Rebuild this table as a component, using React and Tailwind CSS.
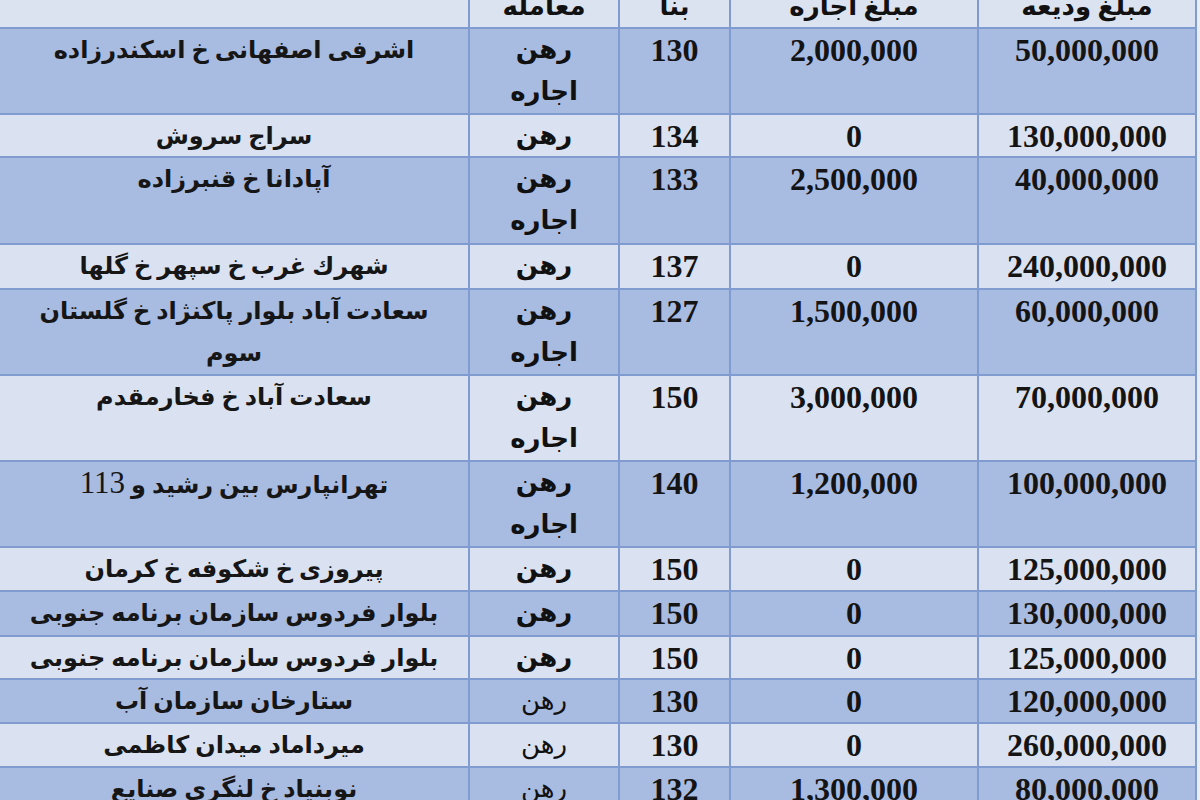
import React from 'react';

const rows = [
	{ h: 'h-[86px]', dark: true, addr: ['اشرفی اصفهانی خ اسکندرزاده'], deal: ['رهن', 'اجاره'], area: '130', rent: '2,000,000', deposit: '50,000,000' },
	{ h: 'h-[43px]', dark: false, addr: ['سراج سروش'], deal: ['رهن'], area: '134', rent: '0', deposit: '130,000,000' },
	{ h: 'h-[87px]', dark: true, addr: ['آپادانا خ قنبرزاده'], deal: ['رهن', 'اجاره'], area: '133', rent: '2,500,000', deposit: '40,000,000' },
	{ h: 'h-[45px]', dark: false, addr: ['شهرك غرب خ سپهر خ گلها'], deal: ['رهن'], area: '137', rent: '0', deposit: '240,000,000' },
	{ h: 'h-[86px]', dark: true, addr: ['سعادت آباد بلوار پاکنژاد خ گلستان', 'سوم'], deal: ['رهن', 'اجاره'], area: '127', rent: '1,500,000', deposit: '60,000,000' },
	{ h: 'h-[86px]', dark: false, addr: ['سعادت آباد خ فخارمقدم'], deal: ['رهن', 'اجاره'], area: '150', rent: '3,000,000', deposit: '70,000,000' },
	{ h: 'h-[86px]', dark: true, addr: ['تهرانپارس بین رشید و '], num: '113', deal: ['رهن', 'اجاره'], area: '140', rent: '1,200,000', deposit: '100,000,000' },
	{ h: 'h-[44px]', dark: false, addr: ['پیروزی خ شکوفه خ کرمان'], deal: ['رهن'], area: '150', rent: '0', deposit: '125,000,000' },
	{ h: 'h-[45px]', dark: true, addr: ['بلوار فردوس سازمان برنامه جنوبی'], deal: ['رهن'], area: '150', rent: '0', deposit: '130,000,000' },
	{ h: 'h-[43px]', dark: false, addr: ['بلوار فردوس سازمان برنامه جنوبی'], deal: ['رهن'], area: '150', rent: '0', deposit: '125,000,000' },
	{ h: 'h-[44px]', dark: true, addr: ['ستارخان سازمان آب'], deal: ['رهن'], area: '130', rent: '0', deposit: '120,000,000', light: true },
	{ h: 'h-[44px]', dark: false, addr: ['میرداماد میدان کاظمی'], deal: ['رهن'], area: '130', rent: '0', deposit: '260,000,000', light: true },
	{ h: 'h-[44px]', dark: true, addr: ['نوبنیاد خ لنگری صنایع'], deal: ['رهن'], area: '132', rent: '1,300,000', deposit: '80,000,000', light: true },
];

const cell = 'border-r-2 border-[#7f9bd0] text-center leading-[42px] overflow-hidden';
const fa = "font-['Liberation_Serif','DejaVu_Sans',sans-serif]";

const Row = ({ row }) => (
	<div className={`flex ${row.h} border-b-2 border-[#7f9bd0] ${row.dark ? 'bg-[#a8bbe1]' : 'bg-[#dae2f1]'}`}>
		<div dir="rtl" className={`${cell} w-[470px] px-1 text-[24px] font-bold text-[#161616] whitespace-nowrap`}>
			{row.addr.map((line, i) => (
				<div key={i}>
					{line}
					{row.num && <span className="text-[31px] font-normal">{row.num}</span>}
				</div>
			))}
		</div>
		<div dir="rtl" className={`${cell} w-[150px] text-[26px] text-[#111] ${row.light ? 'font-normal' : 'font-bold'}`}>
			{row.deal.map(d => <div key={d}>{d}</div>)}
		</div>
		<div className={`${cell} w-[111px] text-[32px] font-bold text-[#141414]`}>{row.area}</div>
		<div className={`${cell} w-[248px] text-[32px] font-bold text-[#141414]`}>{row.rent}</div>
		<div className={`${cell} w-[218px] text-[32px] font-bold text-[#141414]`}>{row.deposit}</div>
	</div>
);

export default function App() {
	return (
		<div className={`w-[1200px] h-[800px] overflow-hidden bg-[#e9edf5] ${fa}`}>
			<div className="w-[1197px] -mt-[14px]">
				<div className="flex h-[43px] border-b-2 border-[#7f9bd0] bg-[#dbe3f1] text-[#111] font-bold">
					<div className={`${cell} w-[470px]`}></div>
					<div dir="rtl" className={`${cell} w-[150px] text-[26px]`}>معامله</div>
					<div dir="rtl" className={`${cell} w-[111px] text-[26px]`}>بنا</div>
					<div dir="rtl" className={`${cell} w-[248px] text-[26px]`}>مبلغ اجاره</div>
					<div dir="rtl" className={`${cell} w-[218px] text-[26px]`}>مبلغ ودیعه</div>
				</div>
				{rows.map((row, i) => <Row key={i} row={row} />)}
			</div>
		</div>
	);
}
